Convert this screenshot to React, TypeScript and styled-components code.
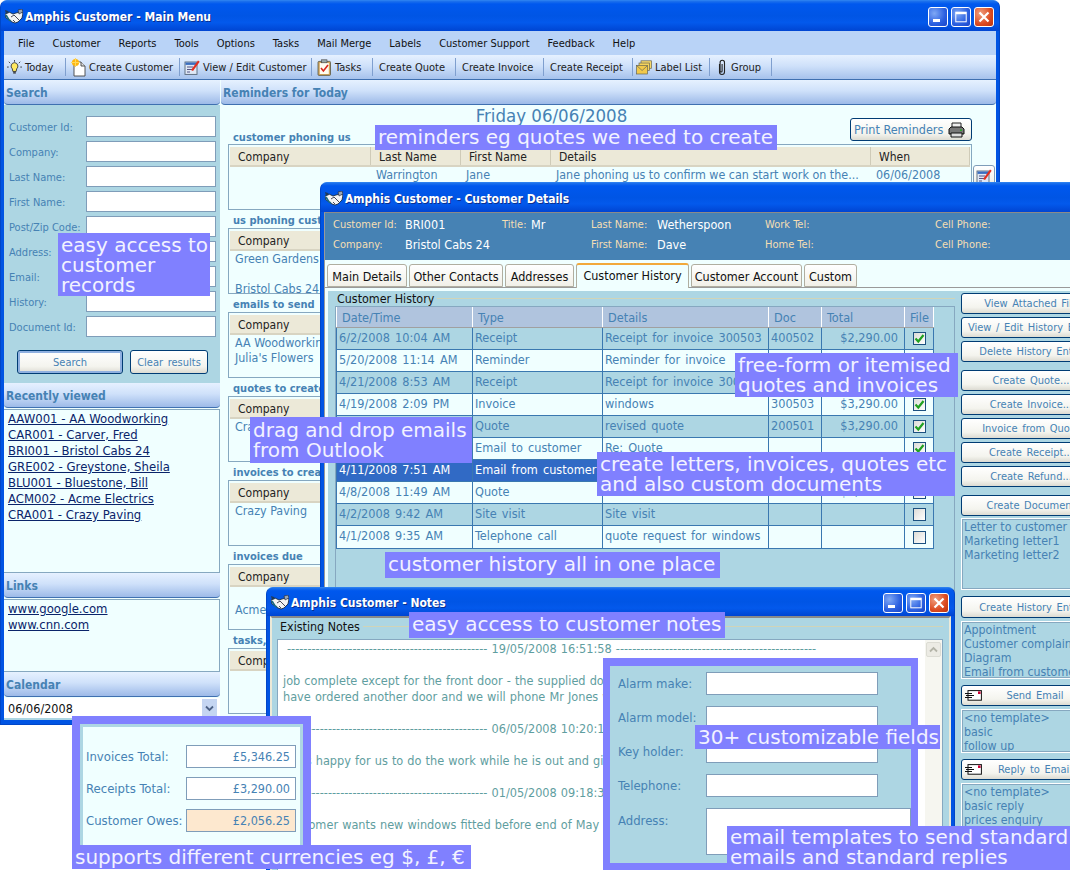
import React from "react";
import styled, { createGlobalStyle } from "styled-components";

const FONT = `"DejaVu Sans Condensed", "DejaVu Sans", sans-serif`;
const STEEL = "#4682b4";
const PANEL = "#add6e3";
const AZURE = "#f0ffff";
const XPBLUE = "#0054e3";

const Global = createGlobalStyle`
  html, body { margin: 0; padding: 0; background: #fff; }
  body { font-family: ${FONT}; font-size: 12px; color: ${STEEL}; font-stretch: condensed; }
  * { box-sizing: border-box; }
`;

const Desktop = styled.div`
  position: relative;
  width: 1070px;
  height: 870px;
  overflow: hidden;
  background: #fff;
`;

const Win = styled.div<{ $x: number; $y: number; $w: number; $h: number; $z: number }>`
  position: absolute;
  left: ${(p) => p.$x}px;
  top: ${(p) => p.$y}px;
  width: ${(p) => p.$w}px;
  height: ${(p) => p.$h}px;
  z-index: ${(p) => p.$z};
  display: flex;
  flex-direction: column;
  background: ${XPBLUE};
  border-radius: 7px 7px 0 0;
  border: 1px solid #0046c8;
  border-top-color: #2a7ff0;
  overflow: hidden;
`;

const TitleBar = styled.div<{ $h: number }>`
  flex: none;
  height: ${(p) => p.$h}px;
  display: flex;
  align-items: center;
  gap: 2px;
  padding: 2px 5px 0 4px;
  background: linear-gradient(180deg, #1f73ec 0%, #0058ee 10%, #0055e5 50%, #0359ec 72%, #0045d2 100%);
`;

const TitleText = styled.div`
  flex: 1;
  color: #fff;
  font-weight: 700;
  font-size: 12px;
  text-shadow: 1px 1px 0 #0a2f8f;
  white-space: nowrap;
`;

const CapBtn = styled.div<{ $red?: boolean }>`
  width: 20px;
  height: 20px;
  border: 1px solid #fff;
  border-radius: 3px;
  background: ${(p) =>
    p.$red
      ? "radial-gradient(circle at 30% 30%, #f0a080, #dc4a20 60%, #b8330f)"
      : "radial-gradient(circle at 30% 30%, #7fa8f5, #2a5fe0 60%, #1a45c8)"};
  display: flex;
  align-items: center;
  justify-content: center;
`;

const CapGroup = styled.div`
  display: flex;
  gap: 3px;
`;

const Inner = styled.div`
  flex: 1;
  min-height: 0;
  display: flex;
  flex-direction: column;
  margin: 0 3px 4px;
  background: ${AZURE};
`;

const MenuBar = styled.div`
  flex: none;
  height: 24px;
  display: flex;
  align-items: center;
  gap: 18px;
  padding-left: 14px;
  background: #b9d3f7;
  color: #111;
  font-size: 11px;
`;

const Toolbar = styled.div`
  flex: none;
  height: 25px;
  display: flex;
  align-items: center;
  padding-left: 3px;
  background: linear-gradient(180deg, #e6f1ff 0%, #cfe1fa 45%, #a6c2ec 100%);
  border-bottom: 1px solid #3f70b0;
  color: #222;
  font-size: 11px;
`;

const ToolItem = styled.div<{ $pad: number; $w: number }>`
  flex: none;
  width: ${(p) => p.$w}px;
  display: flex;
  align-items: center;
  gap: 3px;
  height: 18px;
  padding-left: ${(p) => p.$pad}px;
  border-right: 1px solid #7f9fcf;
  white-space: nowrap;
`;

const Columns = styled.div`
  flex: 1;
  min-height: 0;
  display: flex;
`;

const LeftCol = styled.div`
  flex: none;
  width: 216px;
  display: flex;
  flex-direction: column;
`;

const RightCol = styled.div`
  flex: 1;
  min-width: 0;
  display: flex;
  flex-direction: column;
  margin-left: 1px;
`;

const SectionHead = styled.div`
  flex: none;
  height: 25px;
  display: flex;
  align-items: center;
  padding: 2px 0 0 2px;
  border-radius: 0 0 4px 4px;
  border-bottom: 1px solid #3f70b0;
  background: linear-gradient(180deg, #e6f1ff 0%, #cfe1fa 45%, #9dbae8 100%);
  color: ${STEEL};
  font-weight: 700;
  font-size: 12px;
`;

const SearchPanel = styled.div`
  flex: none;
  height: 278px;
  background: ${PANEL};
  padding: 11px 4px 0 5px;
  display: flex;
  flex-direction: column;
  gap: 4px;
`;

const FormRow = styled.div<{ $label: number; $size?: number }>`
  display: grid;
  grid-template-columns: ${(p) => p.$label}px 1fr;
  align-items: center;
  white-space: nowrap;
  font-size: ${(p) => p.$size ?? 11}px;
`;

const RowLabel = styled.div`
  padding-top: 2px;
`;

const TopLabel = styled.div`
  align-self: start;
  padding-top: 5px;
`;

const TextBox = styled.div<{ $h?: number; $bg?: string }>`
  height: ${(p) => p.$h ?? 21}px;
  background: ${(p) => p.$bg ?? "#fff"};
  border: 1px solid #7f9db9;
  text-align: right;
  padding: 3px 5px 0 0;
  font-size: 12.5px;
  color: ${STEEL};
`;

const SearchButtons = styled.div`
  display: flex;
  gap: 7px;
  margin: 9px 0 0 8px;
`;

const XpButton = styled.div<{ $w: number; $h?: number; $def?: boolean; $mt?: number }>`
  flex: none;
  width: ${(p) => p.$w}px;
  height: ${(p) => p.$h ?? 24}px;
  margin-top: ${(p) => p.$mt ?? 0}px;
  display: flex;
  align-items: center;
  justify-content: center;
  border: 1px solid #003c74;
  border-radius: 3px;
  background: linear-gradient(180deg, #fff 0%, #f4f4ee 70%, #dcdbd2 100%);
  box-shadow: ${(p) => (p.$def ? "inset 0 0 0 2px #8fb0e0" : "none")};
  color: ${STEEL};
  font-size: 11px;
  word-spacing: 1.5px;
  white-space: nowrap;
`;

const IconButton = styled(XpButton)`
  justify-content: flex-start;
  padding-left: 3px;
`;

const IconButtonText = styled.span`
  flex: 1;
  text-align: center;
  padding-right: 12px;
`;

const LinkList = styled.div<{ $h: number }>`
  flex: none;
  height: ${(p) => p.$h}px;
  margin-top: 1px;
  padding: 1px 3px;
  background: ${AZURE};
  border: 1px solid #86a8c0;
  border-left: 0;
  display: flex;
  flex-direction: column;
`;

const NavLink = styled.a`
  color: #0a246a;
  text-decoration: underline;
  font-size: 13px;
  line-height: 16px;
  padding-left: 1px;
  white-space: nowrap;
`;

const DateRow = styled.div`
  flex: 1;
  margin-top: 1px;
  display: flex;
  justify-content: space-between;
  align-items: center;
  padding: 0 3px 0 4px;
  background: #fff;
  color: #111;
  font-size: 12.5px;
  border-bottom: 2px solid ${PANEL};
`;

const DropBtn = styled.div`
  width: 15px;
  height: 18px;
  background: #c5d5f2;
  display: flex;
  align-items: center;
  justify-content: center;
`;

const RemBody = styled.div`
  flex: 1;
  min-height: 0;
  padding: 0 0 0 7px;
  overflow: hidden;
`;

const RemTop = styled.div`
  display: grid;
  grid-template-columns: 1fr auto;
  grid-template-rows: 22px 17px;
  width: 744px;
`;

const DateTitle = styled.div`
  grid-row: 1;
  grid-column: 1 / -1;
  text-align: center;
  padding-right: 97px;
  font-size: 18.5px;
  line-height: 22px;
`;

const SecLabel = styled.div`
  height: 18px;
  padding: 2px 0 0 5px;
  display: flex;
  align-items: center;
  font-weight: 700;
  font-size: 11px;
  white-space: nowrap;
`;

const FirstLabel = styled(SecLabel)`
  grid-row: 2;
  grid-column: 1;
`;

const PrintBtn = styled(XpButton)`
  grid-row: 1 / 3;
  grid-column: 2;
  align-self: end;
  justify-content: space-between;
  padding: 0 6px 0 3px;
  margin-bottom: 3px;
  font-size: 12.5px;
  word-spacing: 0;
`;

const RemRow = styled.div`
  display: flex;
  gap: 1px;
  width: 768px;
`;

const RemGrid = styled.div`
  flex: none;
  width: 744px;
  height: 66px;
  border: 1px solid #86a8c0;
  padding-top: 2px;
  overflow: hidden;
  font-size: 12.4px;
`;

const RemCols = styled.div<{ $head?: boolean }>`
  display: grid;
  grid-template-columns: 141px 90px 90px 320px 1fr;
  height: ${(p) => (p.$head ? 20 : 15)}px;
  line-height: ${(p) => (p.$head ? 20 : 15)}px;
  white-space: nowrap;
  ${(p) =>
    p.$head
      ? `background:#ece9d8;color:#222;border-bottom:2px solid #d8d4c2;margin-left:1px;margin-right:1px;font-size:12px;`
      : ""}
`;

const RemCell = styled.div<{ $head?: boolean }>`
  padding-left: ${(p) => (p.$head ? 8 : 6)}px;
  overflow: hidden;
  ${(p) => (p.$head ? "border-right:1px solid #cfcbb8;" : "")}
`;

const EditBtn = styled(XpButton)`
  margin-top: 21px;
  border-color: #7f9db9;
`;

const LogoWrap = styled.div`
  flex: none;
  width: 18px;
  height: 16px;
  display: flex;
`;

/* Customer details */
const ClientBody = styled.div`
  flex: 1;
  min-height: 0;
  margin: 0 3px;
  border-left: 1px solid #9a9a9a;
  border-top: 1px solid #8a8a8a;
  background: ${AZURE};
  display: flex;
  flex-direction: column;
`;

const InfoBand = styled.div`
  flex: none;
  height: 47px;
  padding: 1px 0 0 8px;
  background: ${STEEL};
  display: grid;
  grid-template-columns: 72px 97px 29px 60px 66px 108px 170px 1fr;
  grid-auto-rows: 20px;
  align-items: center;
  white-space: nowrap;
`;

const InfoLabel = styled.div`
  color: #f5deb3;
  font-size: 11px;
`;

const InfoValue = styled.div`
  color: #fff;
  font-size: 12.5px;
`;

const TabStrip = styled.div`
  flex: none;
  height: 28px;
  padding: 3px 0 0 2px;
  display: flex;
  align-items: flex-end;
  gap: 2px;
  border-bottom: 1px solid #9a9a9a;
`;

const Tab = styled.div<{ $w: number; $on?: boolean }>`
  flex: none;
  width: ${(p) => p.$w}px;
  height: ${(p) => (p.$on ? 25 : 23)}px;
  margin-bottom: ${(p) => (p.$on ? -1 : 0)}px;
  text-align: center;
  line-height: ${(p) => (p.$on ? 21 : 24)}px;
  font-size: 12.5px;
  color: #111;
  white-space: nowrap;
  background: ${(p) => (p.$on ? AZURE : "linear-gradient(180deg,#fff,#f1f0e8)")};
  border: 1px solid #b0aea0;
  border-bottom: ${(p) => (p.$on ? "0" : "1px solid #b0aea0")};
  border-top: ${(p) => (p.$on ? "2px solid #f2a93b" : "1px solid #b0aea0")};
  border-radius: 3px 3px 0 0;
  z-index: ${(p) => (p.$on ? 1 : 0)};
`;

const TabPage = styled.div`
  flex: 1;
  min-height: 0;
  margin: 3px 0 0 3px;
  background: ${PANEL};
  display: flex;
  gap: 6px;
  overflow: hidden;
`;

const HistoryPane = styled.div`
  flex: none;
  width: 627px;
  padding: 1px 0 0 7px;
  display: flex;
  flex-direction: column;
`;

const GroupTitle = styled.div`
  flex: none;
  display: flex;
  align-items: center;
  gap: 3px;
  height: 14px;
  padding: 0 0 2px 2px;
  color: #111;
  font-size: 12.4px;
  white-space: nowrap;
`;

const GroupLine = styled.div`
  flex: 1;
  height: 1px;
  background: #d0d4b8;
`;

const HistoryFrame = styled.div`
  flex: 1;
  border: 1px solid #86a8c0;
  border-bottom: 0;
`;

const HGrid = styled.div`
  width: 598px;
  border-bottom: 1px solid #3a78b0;
`;

const HRow = styled.div<{ $kind: "head" | "white" | "blue" | "sel" }>`
  display: grid;
  grid-template-columns: 136px 130px 166px 53px 83px 30px;
  height: ${(p) => (p.$kind === "head" ? 21 : 22)}px;
  line-height: ${(p) => (p.$kind === "head" ? 21 : 20)}px;
  white-space: nowrap;
  font-size: 12.6px;
  word-spacing: 1.5px;
  color: ${(p) => (p.$kind === "sel" ? "#fff" : STEEL)};
  background: ${(p) =>
    p.$kind === "head" ? "#b0c4de" : p.$kind === "white" ? AZURE : p.$kind === "sel" ? "#316ac5" : PANEL};
  border-bottom: ${(p) => (p.$kind === "head" ? "1px solid #a0a0a0" : "1px solid #3a78b0")};
  &:last-child {
    border-bottom: 0;
  }
`;

const HCell = styled.div<{ $right?: boolean; $head?: boolean }>`
  padding: 0 ${(p) => (p.$right ? 6 : 0)}px 0 ${(p) => (p.$head ? 5 : 2)}px;
  text-align: ${(p) => (p.$right ? "right" : "left")};
  overflow: hidden;
  border-left: 1px solid ${(p) => (p.$head ? "#fff" : "#3a78b0")};
  &:last-child {
    border-right: 1px solid ${(p) => (p.$head ? "#fff" : "#3a78b0")};
  }
`;

const CheckCell = styled(HCell)`
  display: flex;
  align-items: center;
  justify-content: center;
  padding: 0;
`;

const Check = styled.div`
  width: 13px;
  height: 13px;
  border: 1px solid #1c5180;
  background: linear-gradient(135deg, #dcdcd7, #fff);
  display: flex;
  align-items: center;
  justify-content: center;
`;

const SidePane = styled.div`
  flex: none;
  width: 140px;
  padding-top: 2px;
  display: flex;
  flex-direction: column;
`;

const SideList = styled.div<{ $h: number; $mt?: number }>`
  flex: none;
  height: ${(p) => p.$h}px;
  margin-top: ${(p) => p.$mt ?? 3}px;
  padding: 1px 2px 0;
  background: ${PANEL};
  border: 1px solid #fff;
  outline: 1px solid #86a8c0;
  outline-offset: -2px;
  font-size: 12.3px;
  line-height: 14px;
  white-space: nowrap;
  overflow: hidden;
`;

/* Notes */
const NotesBody = styled.div`
  flex: 1;
  min-height: 0;
  margin: 0 3px;
  padding: 2px 6px 0 6px;
  border-top: 2px solid #8a8a8a;
  border-left: 2px solid #ece9d8;
  border-right: 2px solid #ece9d8;
  background: ${PANEL};
  display: flex;
  flex-direction: column;
`;

const NotesBox = styled.div`
  flex: 1;
  min-height: 0;
  display: flex;
  background: #fff;
  border: 1px solid #86a8c0;
  margin-left: -1px;
  margin-top: 5px;
`;

const NotesText = styled.div`
  flex: 1;
  min-width: 0;
  padding: 1px 0 0 5px;
  color: #5f9ea0;
  font-size: 12.6px;
  word-spacing: 0.5px;
  line-height: 16px;
  white-space: pre;
  overflow: hidden;
`;

const NotesLine = styled.div<{ $center?: boolean }>`
  height: 16px;
  padding-left: ${(p) => (p.$center ? 4 : 0)}px;
`;

const ScrollBar = styled.div`
  flex: none;
  width: 17px;
  background: #f6f6f0;
  padding: 2px 1px;
`;

const ScrollArrow = styled.div`
  height: 15px;
  border: 1px solid #dcdcd4;
  border-radius: 2px;
  background: #ecebe4;
  display: flex;
  align-items: center;
  justify-content: center;
`;

/* Overlays */
const Callout = styled.div<{ $x: number; $y: number; $w: number; $h: number; $top?: number }>`
  position: absolute;
  left: ${(p) => p.$x}px;
  top: ${(p) => p.$y}px;
  width: ${(p) => p.$w}px;
  height: ${(p) => p.$h}px;
  z-index: 10;
  background: #8080ff;
  color: #f2f2ff;
  font-family: "DejaVu Sans", sans-serif;
  font-stretch: normal;
  font-size: 20px;
  line-height: 20px;
  padding: ${(p) => p.$top ?? 2}px 0 0 3px;
  white-space: pre;
`;

const Frame = styled.div<{ $x: number; $y: number; $w: number; $h: number; $t: number; $side: number; $inner: string }>`
  position: absolute;
  left: ${(p) => p.$x}px;
  top: ${(p) => p.$y}px;
  width: ${(p) => p.$w}px;
  height: ${(p) => p.$h}px;
  z-index: 9;
  border: solid #8080ff;
  border-width: ${(p) => p.$t}px ${(p) => p.$side}px ${(p) => p.$side}px;
  background: ${(p) => p.$inner};
  display: flex;
  flex-direction: column;
`;

const MoneyGrid = styled.div`
  flex: 1;
  border: 3px solid ${PANEL};
  border-bottom: 0;
  padding: 18px 4px 0 3px;
  display: flex;
  flex-direction: column;
  gap: 9px;
`;

const FieldGrid = styled.div`
  padding: 6px 0 0 8px;
  display: flex;
  flex-direction: column;
  gap: 11px;
`;

const FieldBox = styled(TextBox)`
  width: 172px;
`;

const Logo = () => (
  <LogoWrap>
    <svg width="18" height="16" viewBox="0 0 18 16">
      <path d="M0 5l4-2 4 2 3-1 4-1 3 1-1 5-4 4-3 1-3-1-4-3-2-1z" fill="#f4f4f4" stroke="#123" strokeWidth="0.8" />
      <path d="M1 6l3 5 2 1" fill="none" stroke="#1a6a80" strokeWidth="1.6" />
      <path d="M6 8l3-2 5 5M8 11l2 2" fill="none" stroke="#334" strokeWidth="0.9" />
      <path d="M13 1l4-1 1 3-4 2z" fill="#9aa7b5" stroke="#223" strokeWidth="0.6" />
      <path d="M0 1l3 1 1 2-3 1z" fill="#1e3a5a" />
    </svg>
  </LogoWrap>
);

const WindowCaps = () => (
  <CapGroup>
    <CapBtn>
      <svg width="12" height="12" viewBox="0 0 12 12">
        <rect x="1" y="8" width="7" height="3" fill="#fff" />
      </svg>
    </CapBtn>
    <CapBtn>
      <svg width="12" height="12" viewBox="0 0 12 12">
        <rect x="0.8" y="1.2" width="10.4" height="9.6" fill="none" stroke="#fff" />
        <rect x="0.8" y="1" width="10.4" height="2.2" fill="#fff" />
      </svg>
    </CapBtn>
    <CapBtn $red>
      <svg width="14" height="14" viewBox="0 0 14 14">
        <path d="M2.5 2.5l9 9M11.5 2.5l-9 9" stroke="#fff" strokeWidth="2.2" />
      </svg>
    </CapBtn>
  </CapGroup>
);

const BulbIcon = () => (
  <svg width="15" height="17" viewBox="0 0 17 17">
    <path d="M8.5 3a4 4 0 0 0-2.5 7l.7 3h3.6l.7-3a4 4 0 0 0-2.5-7z" fill="#ffe860" stroke="#222" strokeWidth="0.9" />
    <path d="M7 14.5h3" stroke="#222" strokeWidth="1.4" />
    <path d="M8.5 0v2M2 2l1.6 1.6M15 2l-1.6 1.6M0 8h2M15 8h2" stroke="#222" strokeWidth="0.9" />
  </svg>
);
const NewDocIcon = () => (
  <svg width="15" height="19" viewBox="0 0 15 19">
    <path d="M3 4h7l4 4v10H3z" fill="#fff" stroke="#444" strokeWidth="0.9" />
    <path d="M10 4v4h4" fill="#ddd" stroke="#444" strokeWidth="0.9" />
    <circle cx="4.5" cy="4.5" r="3.6" fill="#ffb70f" />
    <path d="M4.5 0v9M0 4.5h9" stroke="#ffd95a" strokeWidth="1" />
  </svg>
);
const EditIcon = ({ size = 16 }: { size?: number }) => (
  <svg width={size} height={size} viewBox="0 0 16 16">
    <rect x="1" y="3" width="12" height="12.4" fill="#dfe8f6" stroke="#567" strokeWidth="0.9" />
    <rect x="1.5" y="3.5" width="11" height="2.4" fill="#3a6ec0" />
    <path d="M3 8h6M3 10.5h5M3 13h3" stroke="#447" strokeWidth="0.9" />
    <path d="M7 11l7-9.5 1.7 1.3L9 12z" fill="#e03020" />
  </svg>
);
const TaskIcon = () => (
  <svg width="15" height="17" viewBox="0 0 15 17">
    <rect x="1" y="2.4" width="12.5" height="14" rx="1" fill="#d4a75e" stroke="#554" strokeWidth="0.8" />
    <rect x="2.8" y="4" width="9" height="11" fill="#fffdf0" />
    <rect x="4.6" y="0.8" width="5.4" height="3" fill="#9aa" stroke="#444" strokeWidth="0.6" />
    <path d="M4 9l2.4 3 4.6-6" fill="none" stroke="#d8281e" strokeWidth="1.6" />
  </svg>
);
const MailsIcon = () => (
  <svg width="16" height="15" viewBox="0 0 16 15">
    <rect x="5" y="0.8" width="10.5" height="7.5" fill="#f7d86a" stroke="#665" strokeWidth="0.7" />
    <rect x="3" y="3" width="10.5" height="7.5" fill="#f5d35c" stroke="#665" strokeWidth="0.7" />
    <rect x="0.6" y="5.5" width="11" height="8.5" fill="#f2c94a" stroke="#665" strokeWidth="0.7" />
    <path d="M0.6 5.5l5.5 5 5.5-5" fill="none" stroke="#665" strokeWidth="0.7" />
  </svg>
);
const ClipIcon = () => (
  <svg width="11" height="17" viewBox="0 0 11 17">
    <path
      d="M3 5v8a2.5 2.5 0 0 0 5 0V3.5a2.2 2.2 0 0 0-4.4 0V12a1 1 0 0 0 2 0V5"
      transform="translate(-0.5 0)"
      fill="none"
      stroke="#222"
      strokeWidth="1.1"
    />
  </svg>
);
const PrinterIcon = () => (
  <svg width="17" height="16" viewBox="0 0 17 16">
    <path d="M4 1h9v5H4z" fill="#eee" stroke="#222" />
    <path d="M1 7l2-2h11l2 2v5H1z" fill="#777" stroke="#111" />
    <path d="M3 11h11v4H3z" fill="#ddd" stroke="#111" />
    <rect x="12" y="7.5" width="2" height="1.4" fill="#2a2" />
  </svg>
);
const MailBtnIcon = () => (
  <svg width="17" height="11" viewBox="0 0 17 11">
    <rect x="3" y="0.6" width="13.4" height="9.6" fill="#fff" stroke="#111" />
    <rect x="13" y="1.4" width="2.6" height="2.6" fill="#c03" />
    <path d="M0 3.5h7M1 5.5h8M0 7.5h7" stroke="#111" strokeWidth="1.1" />
  </svg>
);
const Tick = () => (
  <svg width="11" height="11" viewBox="0 0 11 11">
    <path d="M1.5 5.5l2.8 3L9.5 2" fill="none" stroke="#21a121" strokeWidth="2.2" />
  </svg>
);
const Chevron = ({ up, color }: { up?: boolean; color: string }) => (
  <svg width="9" height="7" viewBox="0 0 9 7">
    <path d={up ? "M1 5.5l3.5-3.5L8 5.5" : "M1 1.5L4.5 5 8 1.5"} fill="none" stroke={color} strokeWidth="1.8" />
  </svg>
);

const menu = ["File", "Customer", "Reports", "Tools", "Options", "Tasks", "Mail Merge", "Labels", "Customer Support", "Feedback", "Help"];
const searchFields = ["Customer Id:", "Company:", "Last Name:", "First Name:", "Post/Zip Code:", "Address:", "Email:", "History:", "Document Id:"];
const recent = [
  "AAW001 - AA Woodworking",
  "CAR001 - Carver, Fred",
  "BRI001 - Bristol Cabs 24",
  "GRE002 - Greystone, Sheila",
  "BLU001 - Bluestone, Bill",
  "ACM002 - Acme Electrics",
  "CRA001 - Crazy Paving",
];
const headCols = ["Company", "Last Name", "First Name", "Details", "When"];
const sections: { title: string; rows: string[] }[] = [
  { title: "us phoning customers", rows: ["Green Gardens", "", "Bristol Cabs 24"] },
  { title: "emails to send", rows: ["AA Woodworking", "Julia's Flowers"] },
  { title: "quotes to create", rows: ["Crazy Paving"] },
  { title: "invoices to create", rows: ["Crazy Paving"] },
  { title: "invoices due", rows: ["", "Acme Electrics"] },
  { title: "tasks, appointments", rows: [] },
];

type HistRow = { d: string; t: string; de: string; doc: string; tot: string; f: boolean; k: "white" | "blue" | "sel" };
const history: HistRow[] = [
  { d: "6/2/2008 10:04 AM", t: "Receipt", de: "Receipt for invoice 300503", doc: "400502", tot: "$2,290.00", f: true, k: "blue" },
  { d: "5/20/2008 11:14 AM", t: "Reminder", de: "Reminder for invoice", doc: "", tot: "", f: false, k: "white" },
  { d: "4/21/2008 8:53 AM", t: "Receipt", de: "Receipt for invoice 300503", doc: "", tot: "", f: false, k: "blue" },
  { d: "4/19/2008 2:09 PM", t: "Invoice", de: "windows", doc: "300503", tot: "$3,290.00", f: true, k: "white" },
  { d: "", t: "Quote", de: "revised quote", doc: "200501", tot: "$3,290.00", f: true, k: "blue" },
  { d: "", t: "Email to customer", de: "Re: Quote", doc: "", tot: "", f: true, k: "white" },
  { d: "4/11/2008 7:51 AM", t: "Email from customer", de: "", doc: "", tot: "", f: false, k: "sel" },
  { d: "4/8/2008 11:49 AM", t: "Quote", de: "new windows", doc: "200500", tot: "$3,790.00", f: false, k: "white" },
  { d: "4/2/2008 9:42 AM", t: "Site visit", de: "Site visit", doc: "", tot: "", f: false, k: "blue" },
  { d: "4/1/2008 9:35 AM", t: "Telephone call", de: "quote request for windows", doc: "", tot: "", f: false, k: "white" },
];

const tabs = [
  { l: "Main Details", w: 80 },
  { l: "Other Contacts", w: 94 },
  { l: "Addresses", w: 69 },
  { l: "Customer History", w: 113, on: true },
  { l: "Customer Account", w: 111 },
  { l: "Custom", w: 53 },
];

const dash = "-".repeat(49);
const notes: (string | null)[] = [
  `${dash} 19/05/2008 16:51:58 ${dash}`,
  null,
  "job complete except for the front door - the supplied door was the wrong size so we",
  "have ordered another door and we will phone Mr Jones when it arrives",
  null,
  `${dash} 06/05/2008 10:20:14 ${dash}`,
  null,
  "He is happy for us to do the work while he is out and give us the key",
  null,
  `${dash} 01/05/2008 09:18:36 ${dash}`,
  null,
  "Customer wants new windows fitted before end of May",
];

export default function App() {
  return (
    <Desktop>
      <Global />

      <Win $x={0} $y={0} $w={1000} $h={725} $z={1}>
        <TitleBar $h={30}>
          <Logo />
          <TitleText>Amphis Customer - Main Menu</TitleText>
          <WindowCaps />
        </TitleBar>
        <Inner>
          <MenuBar>
            {menu.map((m) => (
              <div key={m}>{m}</div>
            ))}
          </MenuBar>
          <Toolbar>
            <ToolItem $pad={0} $w={59}><BulbIcon />Today</ToolItem>
            <ToolItem $pad={5} $w={114}><NewDocIcon />Create Customer</ToolItem>
            <ToolItem $pad={4} $w={132}><EditIcon />View / Edit Customer</ToolItem>
            <ToolItem $pad={5} $w={61}><TaskIcon />Tasks</ToolItem>
            <ToolItem $pad={6} $w={83}>Create Quote</ToolItem>
            <ToolItem $pad={6} $w={88}>Create Invoice</ToolItem>
            <ToolItem $pad={6} $w={89}>Create Receipt</ToolItem>
            <ToolItem $pad={3} $w={77}><MailsIcon />Label List</ToolItem>
            <ToolItem $pad={7} $w={62}><ClipIcon />Group</ToolItem>
          </Toolbar>
          <Columns>
            <LeftCol>
              <SectionHead>Search</SectionHead>
              <SearchPanel>
                {searchFields.map((f) => (
                  <FormRow key={f} $label={77}>
                    <RowLabel>{f}</RowLabel>
                    <TextBox />
                  </FormRow>
                ))}
                <SearchButtons>
                  <XpButton $w={106} $def>Search</XpButton>
                  <XpButton $w={78}>Clear results</XpButton>
                </SearchButtons>
              </SearchPanel>
              <SectionHead>Recently viewed</SectionHead>
              <LinkList $h={164}>
                {recent.map((r) => (
                  <NavLink key={r}>{r}</NavLink>
                ))}
              </LinkList>
              <SectionHead>Links</SectionHead>
              <LinkList $h={73}>
                <NavLink>www.google.com</NavLink>
                <NavLink>www.cnn.com</NavLink>
              </LinkList>
              <SectionHead>Calendar</SectionHead>
              <DateRow>
                <span>06/06/2008</span>
                <DropBtn><Chevron color="#4d6185" /></DropBtn>
              </DateRow>
            </LeftCol>
            <RightCol>
              <SectionHead>Reminders for Today</SectionHead>
              <RemBody>
                <RemTop>
                  <DateTitle>Friday 06/06/2008</DateTitle>
                  <FirstLabel>customer phoning us</FirstLabel>
                  <PrintBtn $w={122} $h={23}>
                    Print Reminders
                    <PrinterIcon />
                  </PrintBtn>
                </RemTop>
                <RemRow>
                  <RemGrid>
                    <RemCols $head>
                      {headCols.map((h) => (
                        <RemCell key={h} $head>{h}</RemCell>
                      ))}
                    </RemCols>
                    <RemCols>
                      <RemCell />
                      <RemCell>Warrington</RemCell>
                      <RemCell>Jane</RemCell>
                      <RemCell>Jane phoning us to confirm we can start work on the...</RemCell>
                      <RemCell>06/06/2008</RemCell>
                    </RemCols>
                  </RemGrid>
                  <EditBtn $w={22} $h={22}><EditIcon /></EditBtn>
                </RemRow>
                {sections.map((s) => (
                  <div key={s.title}>
                    <SecLabel>{s.title}</SecLabel>
                    <RemGrid>
                      <RemCols $head>
                        {headCols.map((h) => (
                          <RemCell key={h} $head>{h}</RemCell>
                        ))}
                      </RemCols>
                      {s.rows.map((r, i) => (
                        <RemCols key={i}>
                          <RemCell>{r}</RemCell>
                        </RemCols>
                      ))}
                    </RemGrid>
                  </div>
                ))}
              </RemBody>
            </RightCol>
          </Columns>
        </Inner>
      </Win>

      <Win $x={320} $y={182} $w={800} $h={720} $z={2}>
        <TitleBar $h={29}>
          <Logo />
          <TitleText>Amphis Customer - Customer Details</TitleText>
        </TitleBar>
        <ClientBody>
          <InfoBand>
            <InfoLabel>Customer Id:</InfoLabel>
            <InfoValue>BRI001</InfoValue>
            <InfoLabel>Title:</InfoLabel>
            <InfoValue>Mr</InfoValue>
            <InfoLabel>Last Name:</InfoLabel>
            <InfoValue>Wetherspoon</InfoValue>
            <InfoLabel>Work Tel:</InfoLabel>
            <InfoLabel>Cell Phone:</InfoLabel>
            <InfoLabel>Company:</InfoLabel>
            <InfoValue>Bristol Cabs 24</InfoValue>
            <div />
            <div />
            <InfoLabel>First Name:</InfoLabel>
            <InfoValue>Dave</InfoValue>
            <InfoLabel>Home Tel:</InfoLabel>
            <InfoLabel>Cell Phone:</InfoLabel>
          </InfoBand>
          <TabStrip>
            {tabs.map((t) => (
              <Tab key={t.l} $w={t.w} $on={t.on}>{t.l}</Tab>
            ))}
          </TabStrip>
          <TabPage>
            <HistoryPane>
              <GroupTitle>Customer History<GroupLine /></GroupTitle>
              <HistoryFrame>
                <HGrid>
                  <HRow $kind="head">
                    {["Date/Time", "Type", "Details", "Doc", "Total", "File"].map((h) => (
                      <HCell key={h} $head>{h}</HCell>
                    ))}
                  </HRow>
                  {history.map((r, i) => (
                    <HRow key={i} $kind={r.k}>
                      <HCell>{r.d}</HCell>
                      <HCell>{r.t}</HCell>
                      <HCell>{r.de}</HCell>
                      <HCell>{r.doc}</HCell>
                      <HCell $right>{r.tot}</HCell>
                      <CheckCell>
                        <Check>{r.f && <Tick />}</Check>
                      </CheckCell>
                    </HRow>
                  ))}
                </HGrid>
              </HistoryFrame>
            </HistoryPane>
            <SidePane>
              <XpButton $w={140} $h={21}>View Attached File</XpButton>
              <XpButton $w={140} $h={21} $mt={3}>View / Edit History Entry</XpButton>
              <XpButton $w={140} $h={21} $mt={3}>Delete History Entry</XpButton>
              <XpButton $w={140} $h={21} $mt={8}>Create Quote...</XpButton>
              <XpButton $w={140} $h={21} $mt={3}>Create Invoice...</XpButton>
              <XpButton $w={140} $h={21} $mt={3}>Invoice from Quote</XpButton>
              <XpButton $w={140} $h={21} $mt={3}>Create Receipt...</XpButton>
              <XpButton $w={140} $h={21} $mt={3}>Create Refund...</XpButton>
              <XpButton $w={140} $h={21} $mt={8}>Create Document</XpButton>
              <SideList $h={72} $mt={2}>
                Letter to customer<br />Marketing letter1<br />Marketing letter2
              </SideList>
              <XpButton $w={140} $h={22} $mt={6}>Create History Entry</XpButton>
              <SideList $h={58}>
                Appointment<br />Customer complaint<br />Diagram<br />Email from customer
              </SideList>
              <IconButton $w={140} $h={21} $mt={6}><MailBtnIcon /><IconButtonText>Send Email</IconButtonText></IconButton>
              <SideList $h={44}>
                {"<no template>"}<br />basic<br />follow up
              </SideList>
              <IconButton $w={140} $h={21} $mt={6}><MailBtnIcon /><IconButtonText>Reply to Email</IconButtonText></IconButton>
              <SideList $h={60}>
                {"<no template>"}<br />basic reply<br />prices enquiry
              </SideList>
            </SidePane>
          </TabPage>
        </ClientBody>
      </Win>

      <Win $x={266} $y={587} $w={689} $h={330} $z={3}>
        <TitleBar $h={28}>
          <Logo />
          <TitleText>Amphis Customer - Notes</TitleText>
          <WindowCaps />
        </TitleBar>
        <NotesBody>
          <GroupTitle>Existing Notes<GroupLine /></GroupTitle>
          <NotesBox>
            <NotesText>
              {notes.map((n, i) => (
                <NotesLine key={i} $center={!!n && n.startsWith("-")}>{n}</NotesLine>
              ))}
            </NotesText>
            <ScrollBar>
              <ScrollArrow><Chevron up color="#b4b4a8" /></ScrollArrow>
            </ScrollBar>
          </NotesBox>
        </NotesBody>
      </Win>

      <Frame $x={72} $y={716} $w={239} $h={140} $t={8} $side={8} $inner={AZURE}>
        <MoneyGrid>
          <FormRow $label={100} $size={13}>
            <div>Invoices Total:</div>
            <TextBox $h={23}>£5,346.25</TextBox>
          </FormRow>
          <FormRow $label={100} $size={13}>
            <div>Receipts Total:</div>
            <TextBox $h={23}>£3,290.00</TextBox>
          </FormRow>
          <FormRow $label={100} $size={13}>
            <div>Customer Owes:</div>
            <TextBox $h={23} $bg="#fde8cf">£2,056.25</TextBox>
          </FormRow>
        </MoneyGrid>
      </Frame>

      <Frame $x={603} $y={658} $w={315} $h={212} $t={8} $side={7} $inner={PANEL}>
        <FieldGrid>
          <FormRow $label={88} $size={13}><div>Alarm make:</div><FieldBox $h={23} /></FormRow>
          <FormRow $label={88} $size={13}><div>Alarm model:</div><FieldBox $h={23} /></FormRow>
          <FormRow $label={88} $size={13}><div>Key holder:</div><FieldBox $h={23} /></FormRow>
          <FormRow $label={88} $size={13}><div>Telephone:</div><FieldBox $h={23} /></FormRow>
          <FormRow $label={88} $size={13}><TopLabel>Address:</TopLabel><TextBox $h={47} /></FormRow>
        </FieldGrid>
      </Frame>

      <Callout $x={375} $y={125} $w={402} $h={25}>reminders eg quotes we need to create</Callout>
      <Callout $x={58} $y={233} $w={152} $h={63}>{"easy access to\ncustomer\nrecords"}</Callout>
      <Callout $x={250} $y={417} $w={222} $h={46} $top={3}>{"drag and drop emails\nfrom Outlook"}</Callout>
      <Callout $x={735} $y={353} $w={223} $h={44}>{"free-form or itemised\nquotes and invoices"}</Callout>
      <Callout $x={597} $y={452} $w={358} $h={44}>{"create letters, invoices, quotes etc\nand also custom documents"}</Callout>
      <Callout $x={385} $y={552} $w={335} $h={26}>customer history all in one place</Callout>
      <Callout $x={409} $y={612} $w={316} $h={26}>easy access to customer notes</Callout>
      <Callout $x={695} $y={725} $w={245} $h={24}>30+ customizable fields</Callout>
      <Callout $x={72} $y={845} $w={399} $h={24}>supports different currencies eg $, £, €</Callout>
      <Callout $x={727} $y={826} $w={343} $h={44} $top={1}>{"email templates to send standard\nemails and standard replies"}</Callout>
    </Desktop>
  );
}
